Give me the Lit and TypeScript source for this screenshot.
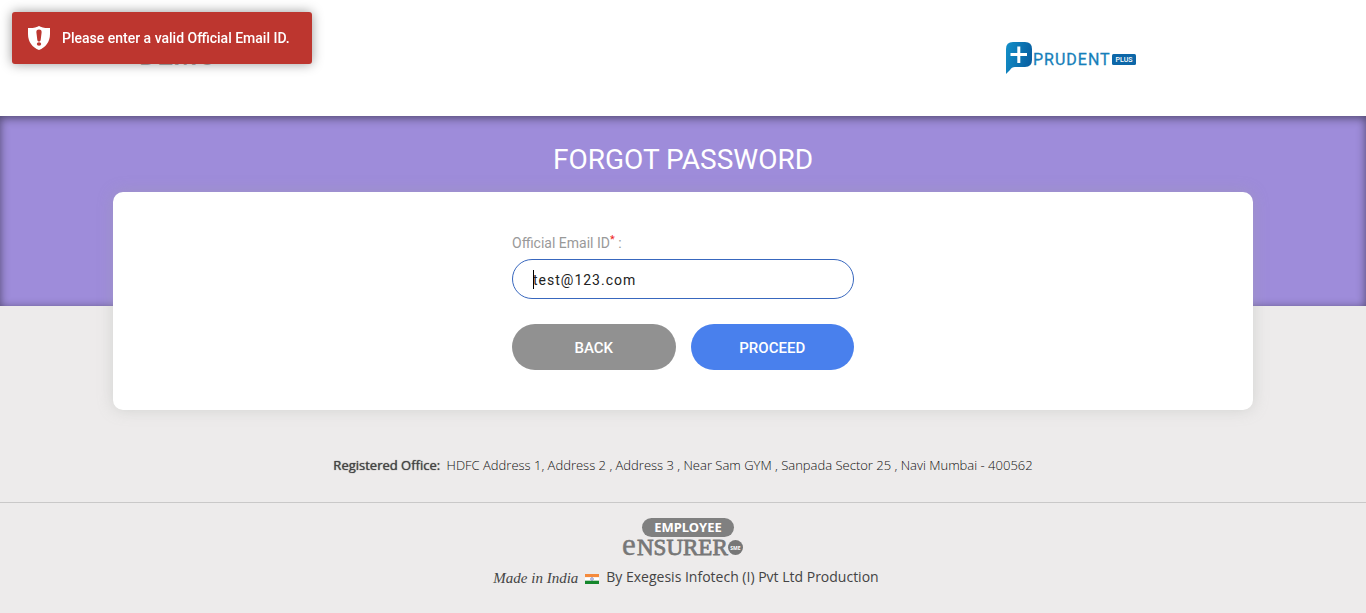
import { LitElement, html, css } from "lit";
import { customElement, property, state } from "lit/decorators.js";

@customElement("toast-message")
class ToastMessage extends LitElement {
  @property() message = "";

  static styles = css`
    :host {
      position: fixed;
      top: 12px;
      left: 12px;
      z-index: 10;
    }
    .toast {
      display: flex;
      align-items: center;
      box-sizing: border-box;
      width: 300px;
      min-height: 52px;
      padding: 14px 15px;
      gap: 11px;
      border-radius: 3px;
      background: #bd362f;
      color: #fff;
      box-shadow: 0 0 12px #999;
      font: 500 14px/20px Roboto, sans-serif;
    }
    .icon {
      width: 24px;
      height: 24px;
      flex: none;
    }
    .text {
      white-space: nowrap;
    }
  `;

  render() {
    return html`
      <div class="toast" role="alert">
        <svg class="icon" viewBox="0 0 24 24" aria-hidden="true">
          <path
            fill="#fff"
            d="M12 0C10 1.500 5.500 2.300 1 2V8c0 8 4.500 13.500 11 16 6.500-2.500 11-8 11-16V2C18.500 2.300 14 1.500 12 0z"
          />
          <path fill="#bd362f" d="M12 3.500c-2 0-2.800 1.200-2.600 3l.9 7.200c.1 1.200.7 1.800 1.700 1.800s1.600-.6 1.700-1.800l.9-7.200c.2-1.800-.6-3-2.600-3z" />
          <ellipse cx="12" cy="18" rx="2.200" ry="1.700" fill="#bd362f" />
        </svg>
        <span class="text">${this.message}</span>
      </div>
    `;
  }
}

@customElement("prudent-logo")
class PrudentLogo extends LitElement {
  static styles = css`
    :host {
      display: block;
    }
    .logo {
      display: block;
      width: 132px;
      height: 34px;
    }
    .name {
      font: 400 16px Roboto, sans-serif;
      letter-spacing: 1px;
      fill: #167fba;
      stroke: #167fba;
      stroke-width: 0.3;
    }
    .plus {
      font: 500 7px Roboto, sans-serif;
      fill: #fff;
    }
  `;

  render() {
    return html`
      <svg class="logo" viewBox="0 0 132 34" role="img" aria-label="Prudent Plus">
        <defs>
          <linearGradient id="mark" x1="0" y1="0" x2="1" y2="0.3">
            <stop offset="0" stop-color="#1390c8" />
            <stop offset="1" stop-color="#0861a3" />
          </linearGradient>
        </defs>
        <path fill="url(#mark)" d="M8 1h12q7 0 7 7v11q0 7-7 7H10Q6.500 26 5 29L1 33V8q0-7 7-7z" />
        <path stroke="#fff" stroke-width="3" d="M5.500 13.500h16.500M13.800 5.500v16.500" />
        <text class="name" x="28" y="24">PRUDENT</text>
        <rect x="107" y="13" width="24" height="11" rx="1.500" fill="#0d67a8" />
        <text class="plus" x="119" y="21" text-anchor="middle">PLUS</text>
      </svg>
    `;
  }
}

@customElement("ensurer-logo")
class EnsurerLogo extends LitElement {
  static styles = css`
    :host {
      display: block;
    }
    .logo {
      display: block;
      width: 122px;
      height: 40px;
      overflow: visible;
    }
    .top {
      font: 700 13px "Noto Sans", sans-serif;
      fill: #fff;
    }
    .initial {
      font: 400 31px "Liberation Serif", serif;
      fill: #777;
      stroke: #777;
      stroke-width: 0.4;
    }
    .name {
      font: 400 23px "Liberation Serif", serif;
      fill: #777;
      stroke: #777;
      stroke-width: 0.8;
    }
    .tag {
      font: 700 5px "Open Sans", sans-serif;
      fill: #fff;
    }
  `;

  render() {
    return html`
      <svg class="logo" viewBox="0 0 122 40" role="img" aria-label="Employee Ensurer SME">
        <rect x="20" y="1" width="92" height="19" rx="9.500" fill="#808080" />
        <text class="top" x="66" y="15" text-anchor="middle">EMPLOYEE</text>
        <text class="initial" x="0" y="38">e</text>
        <text class="name" x="15" y="38">NSURER</text>
        <circle cx="113.500" cy="30.500" r="7.500" fill="#777" />
        <text class="tag" x="113.500" y="32.500" text-anchor="middle">SME</text>
      </svg>
    `;
  }
}

@customElement("app-root")
class AppRoot extends LitElement {
  @state() private email = "test@123.com";
  @state() private error = "Please enter a valid Official Email ID.";

  static styles = css`
    :host {
      display: flex;
      flex-direction: column;
      min-height: 100vh;
      background: #edebeb;
      color: #444;
      font-family: Roboto, sans-serif;
    }
    .header {
      background: #fff;
    }
    .container {
      box-sizing: border-box;
      max-width: 1140px;
      margin: 0 auto;
    }
    .brands {
      display: flex;
      justify-content: space-between;
      align-items: center;
      height: 116px;
      padding: 0 116px 0 26px;
    }
    .client {
      padding-bottom: 4px;
      font: 500 28px/32px Roboto, sans-serif;
      color: #888;
    }
    .band {
      box-sizing: border-box;
      height: 190px;
      padding-top: 26px;
      background: #9e8cda;
      box-shadow: inset 0 2px 10px rgba(0, 0, 0, 0.5);
    }
    .title {
      margin: 0;
      text-align: center;
      color: #fff;
      font: 400 28px/36px Roboto, sans-serif;
    }
    .card {
      position: relative;
      width: 100%;
      margin-top: -114px;
      padding: 40px 15px;
      border-radius: 10px;
      background: #fff;
      box-shadow: 0 0 15px rgba(158, 162, 158, 0.35);
    }
    .form {
      max-width: 342px;
      margin: 0 auto;
    }
    .label {
      display: block;
      color: #999;
      font-size: 14px;
      line-height: 22px;
      margin-bottom: 5px;
    }
    .required {
      color: #e22;
      font-size: 11px;
      line-height: 0;
      vertical-align: 5px;
    }
    .field {
      position: relative;
    }
    .input {
      display: block;
      box-sizing: border-box;
      width: 100%;
      height: 40px;
      padding: 2px 20px 0;
      border: 1px solid #3867be;
      border-radius: 20px;
      outline: none;
      background: #fff;
      color: #222;
      font: 400 14px Roboto, sans-serif;
      letter-spacing: 1px;
    }
    .caret {
      position: absolute;
      left: 21px;
      top: 11px;
      width: 1px;
      height: 19px;
      background: #000;
    }
    .actions {
      display: grid;
      grid-template-columns: 1fr 1fr;
      gap: 15px;
      margin-top: 25px;
    }
    .button {
      height: 46px;
      padding: 2px 0 0;
      border: 0;
      border-radius: 23px;
      color: #fff;
      font: 500 15px Roboto, sans-serif;
      cursor: pointer;
    }
    .back {
      background: #919191;
    }
    .proceed {
      background: #4980ed;
    }
    .office {
      margin: 0;
      padding: 45px 15px 26px;
      text-align: center;
      font: 300 13px/21px "Open Sans", sans-serif;
      color: #111;
      border-bottom: 1px solid #c9c8c8;
    }
    .office strong {
      margin-right: 3px;
      font-weight: 400;
      color: #444;
      text-shadow: 0 0 1px #444;
    }
    .credits {
      display: flex;
      flex-direction: column;
      align-items: center;
      gap: 8px;
      padding: 14px 0 24px;
    }
    .made {
      display: flex;
      align-items: center;
      gap: 7px;
      margin: 0;
      padding-left: 6px;
      font: 400 14px/20px "Open Sans", sans-serif;
    }
    .script {
      padding-top: 3px;
      font: italic 400 15px/20px "Liberation Serif", cursive;
    }
    .flag {
      width: 14px;
      height: 10px;
      padding-top: 4px;
    }
  `;

  private onInput(e: Event) {
    this.email = (e.target as HTMLInputElement).value;
  }

  render() {
    return html`
      <toast-message .message=${this.error}></toast-message>
      <header class="header">
        <div class="container brands">
          <span class="client">DEMO</span>
          <prudent-logo></prudent-logo>
        </div>
      </header>
      <div class="band"><h1 class="title">FORGOT PASSWORD</h1></div>
      <main class="container card">
        <form class="form" novalidate @submit=${(e: Event) => e.preventDefault()}>
          <label class="label" for="email">Official Email ID<span class="required">*</span> :</label>
          <div class="field">
            <input class="input" id="email" type="text" .value=${this.email} @input=${this.onInput} />
            <span class="caret"></span>
          </div>
          <div class="actions">
            <button class="button back" type="button">BACK</button>
            <button class="button proceed" type="submit">PROCEED</button>
          </div>
        </form>
      </main>
      <footer>
        <p class="office">
          <strong>Registered Office:</strong>
          HDFC Address 1, Address 2 , Address 3 , Near Sam GYM , Sanpada Sector 25 , Navi Mumbai - 400562
        </p>
        <div class="credits">
          <ensurer-logo></ensurer-logo>
          <p class="made">
            <span class="script">Made in India</span>
            <svg class="flag" viewBox="0 0 14 10" aria-hidden="true">
              <path fill="#f58a3c" d="M0 0h14v3.300H0z" />
              <path fill="#fff" d="M0 3.300h14v3.400H0z" />
              <path fill="#15872c" d="M0 6.700h14V10H0z" />
              <circle cx="7" cy="5" r="1.300" fill="none" stroke="#5560b0" stroke-width="0.700" />
            </svg>
            <span>By Exegesis Infotech (I) Pvt Ltd Production</span>
          </p>
        </div>
      </footer>
    `;
  }
}
